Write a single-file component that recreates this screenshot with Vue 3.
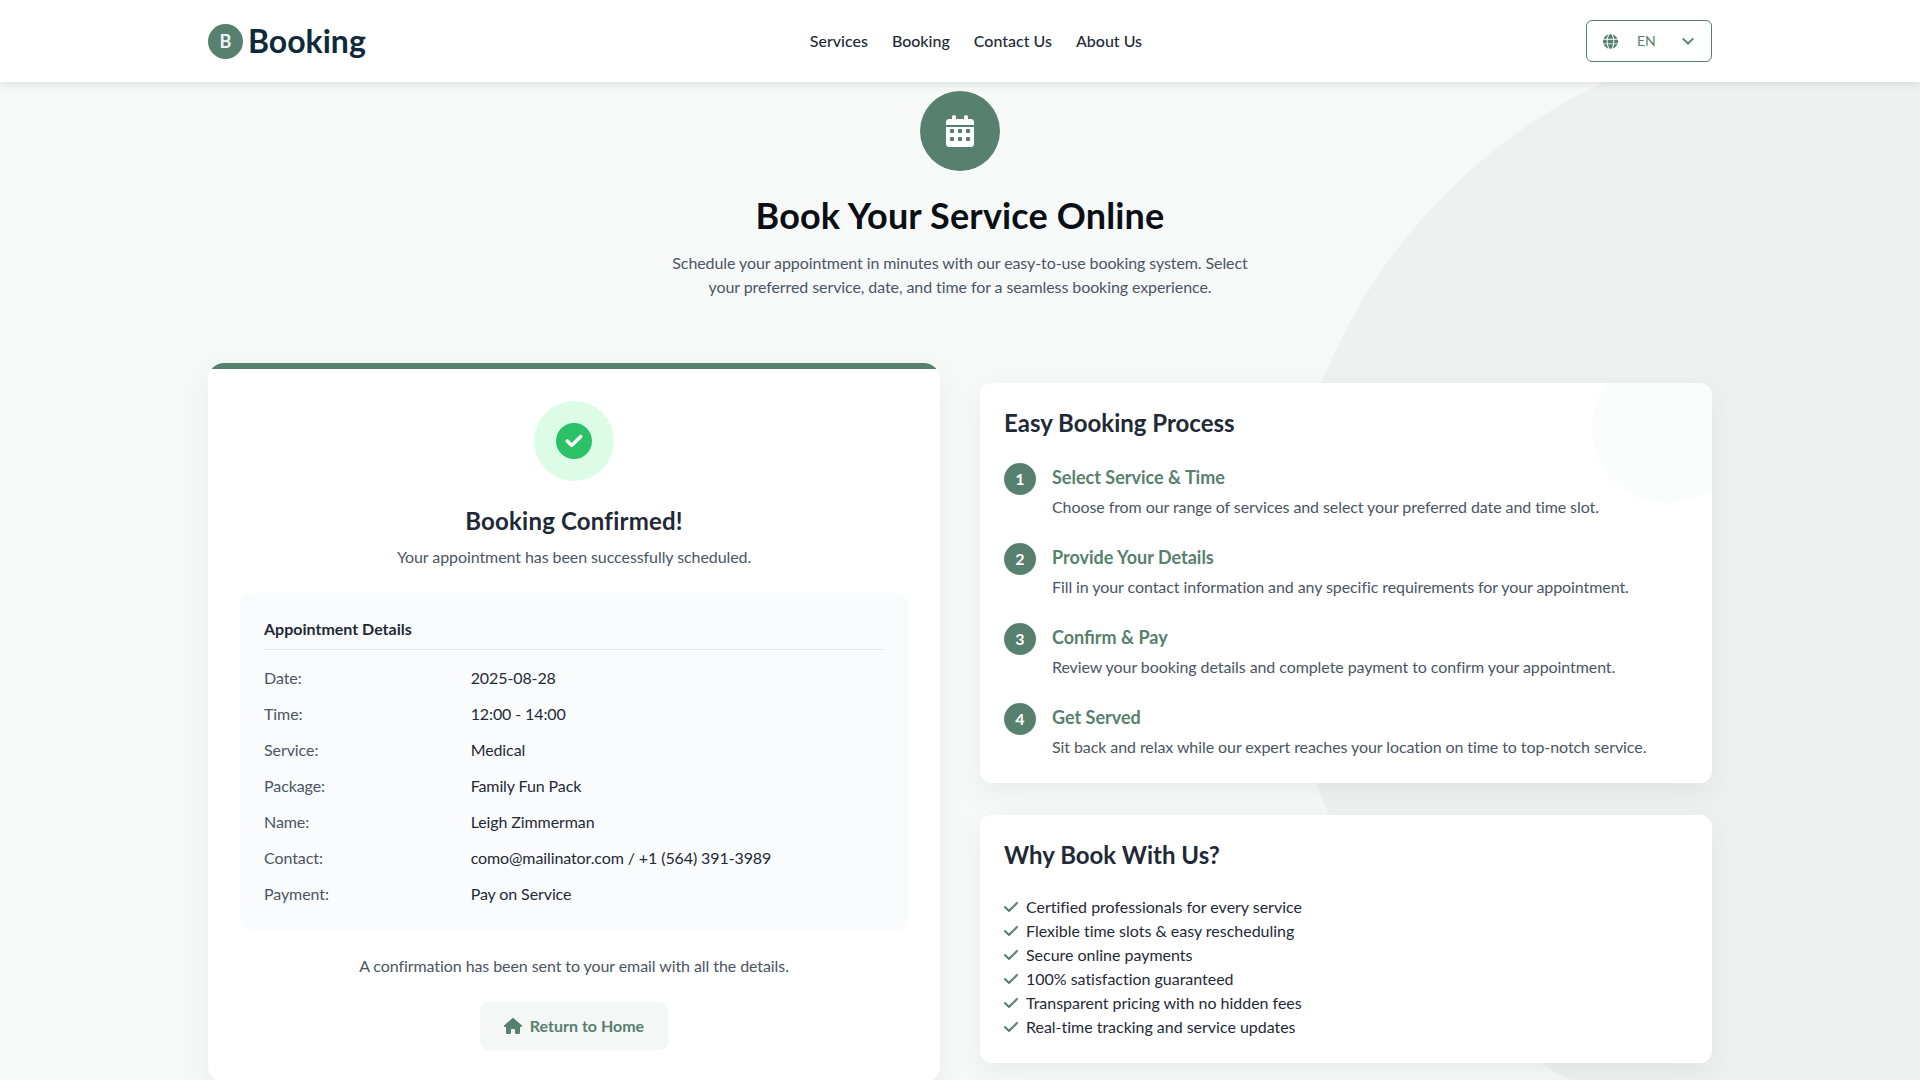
<template>
  <div class="page">
    <div class="blob"></div>
    <header class="topbar">
      <div class="topbar-inner">
        <a class="logo">
          <span class="logo-mark">B</span>
          <span class="logo-text">Booking</span>
        </a>
        <nav class="nav">
          <a v-for="link in links" :key="link">{{ link }}</a>
        </nav>
        <div class="lang">
          <svg class="globe" viewBox="0 0 512 512"><path d="M352 256c0 22.200-1.200 43.600-3.300 64H163.300c-2.200-20.400-3.300-41.800-3.300-64s1.200-43.600 3.300-64h185.400c2.200 20.400 3.300 41.800 3.300 64zm28.800-64h123.100c5.300 20.500 8.100 41.900 8.100 64s-2.800 43.500-8.100 64H380.800c2.100-20.600 3.200-42 3.200-64s-1.100-43.400-3.200-64zm112.600-32H376.700c-10-63.900-29.800-117.400-55.300-151.600 78.300 20.700 142 77.500 171.900 151.600zm-149.100 0H167.700c6.100-36.400 15.500-68.600 27-94.700 10.500-23.600 22.200-40.700 33.500-51.500C239.400 3.200 248.700 0 256 0s16.600 3.200 27.800 13.800c11.300 10.800 23 27.900 33.500 51.500 11.600 26 20.900 58.200 27 94.700zm-209 0H18.600C48.600 85.900 112.200 29.100 190.600 8.400 165.100 42.600 145.300 96.100 135.300 160zM8.100 192h123.100c-2.100 20.600-3.200 42-3.200 64s1.100 43.400 3.200 64H8.100C2.800 299.500 0 278.100 0 256s2.800-43.500 8.100-64zm186.600 254.600c-11.600-26-20.900-58.200-27-94.600h176.600c-6.100 36.400-15.500 68.600-27 94.600-10.500 23.600-22.200 40.700-33.500 51.500-11.200 10.700-20.500 13.900-27.800 13.900s-16.600-3.200-27.800-13.800c-11.300-10.800-23-27.900-33.500-51.500zM135.300 352c10 63.900 29.800 117.400 55.300 151.600-78.400-20.700-142-77.500-172-151.600h116.700zm358.100 0c-30 74.100-93.600 130.900-171.900 151.600 25.500-34.200 45.200-87.700 55.300-151.600h116.600z"/></svg>
          <span class="lang-code">EN</span>
          <svg class="chevron" viewBox="0 0 16 16"><path d="M2 5l6 6 6-6" /></svg>
        </div>
      </div>
    </header>

    <main class="main">
      <section class="hero">
        <div class="hero-icon">
          <svg viewBox="0 0 448 512"><path d="M96 32V64H48C21.500 64 0 85.500 0 112v48H448V112c0-26.500-21.500-48-48-48H352V32c0-17.700-14.300-32-32-32s-32 14.300-32 32V64H160V32c0-17.700-14.300-32-32-32S96 14.300 96 32zM448 192H0V464c0 26.500 21.500 48 48 48H400c26.500 0 48-21.500 48-48V192zM64 240c0-8.800 7.200-16 16-16h32c8.800 0 16 7.200 16 16v32c0 8.800-7.200 16-16 16H80c-8.800 0-16-7.200-16-16V240zm128 0c0-8.800 7.200-16 16-16h32c8.800 0 16 7.200 16 16v32c0 8.800-7.200 16-16 16H208c-8.800 0-16-7.200-16-16V240zm144-16h32c8.800 0 16 7.200 16 16v32c0 8.800-7.200 16-16 16H336c-8.800 0-16-7.200-16-16V240c0-8.800 7.200-16 16-16zM64 368c0-8.800 7.200-16 16-16h32c8.800 0 16 7.200 16 16v32c0 8.800-7.200 16-16 16H80c-8.800 0-16-7.200-16-16V368zm144-16h32c8.800 0 16 7.200 16 16v32c0 8.800-7.200 16-16 16H208c-8.800 0-16-7.200-16-16V368c0-8.800 7.200-16 16-16zm112 16c0-8.800 7.200-16 16-16h32c8.800 0 16 7.200 16 16v32c0 8.800-7.200 16-16 16H336c-8.800 0-16-7.200-16-16V368z"/></svg>
        </div>
        <h1>Book Your Service Online</h1>
        <p>Schedule your appointment in minutes with our easy-to-use booking system. Select your preferred service, date, and time for a seamless booking experience.</p>
      </section>

      <div class="columns">
        <section class="confirm-card">
          <div class="success-ring">
            <svg viewBox="0 0 512 512"><circle cx="256" cy="256" r="220" fill="#fff" /><path d="M256 512A256 256 0 1 0 256 0a256 256 0 1 0 0 512zM369 209L241 337c-9.400 9.400-24.600 9.400-33.900 0l-64-64c-9.400-9.400-9.400-24.600 0-33.900s24.600-9.400 33.900 0l47 47L335 175c9.400-9.400 24.600-9.400 33.900 0s9.400 24.600 0 33.900z" /></svg>
          </div>
          <h2>Booking Confirmed!</h2>
          <p class="muted">Your appointment has been successfully scheduled.</p>

          <div class="details">
            <h3>Appointment Details</h3>
            <div class="detail-row" v-for="row in details" :key="row.label">
              <span class="detail-label">{{ row.label }}</span>
              <span class="detail-value">{{ row.value }}</span>
            </div>
          </div>

          <p class="muted sent">A confirmation has been sent to your email with all the details.</p>
          <button class="home-btn">
            <svg viewBox="0 0 576 512"><path d="M575.800 255.500c0 18-15 32.100-32 32.100h-32l.7 160.200c0 2.700-.2 5.400-.5 8.100V472c0 22.100-17.900 40-40 40H456c-1.100 0-2.200 0-3.300-.1c-1.400 .1-2.800 .1-4.200 .1H416 392c-22.100 0-40-17.900-40-40V448 384c0-17.700-14.300-32-32-32H256c-17.700 0-32 14.300-32 32v64 24c0 22.100-17.900 40-40 40H160 128.100c-1.500 0-3-.1-4.500-.2c-1.200 .1-2.400 .2-3.600 .2H104c-22.100 0-40-17.900-40-40V360c0-.9 0-1.900 .1-2.800V287.600H32c-18 0-32-14-32-32.100c0-9 3-17 10-24L266.400 8c7-7 15-8 22-8s15 2 21 7L564.800 231.500c8 7 12 15 11 24z"/></svg>
            Return to Home
          </button>
        </section>

        <aside class="side">
          <section class="side-card process">
            <h2>Easy Booking Process</h2>
            <div class="step" v-for="(step, i) in steps" :key="step.title">
              <span class="step-num">{{ i + 1 }}</span>
              <div>
                <h4>{{ step.title }}</h4>
                <p class="muted">{{ step.text }}</p>
              </div>
            </div>
          </section>

          <section class="side-card">
            <h2>Why Book With Us?</h2>
            <ul class="perks">
              <li v-for="perk in perks" :key="perk">
                <svg viewBox="0 0 448 512"><path d="M438.600 105.400c12.500 12.500 12.500 32.800 0 45.300l-256 256c-12.500 12.500-32.800 12.500-45.300 0l-128-128c-12.500-12.500-12.500-32.800 0-45.300s32.800-12.500 45.300 0L160 338.700 393.400 105.400c12.500-12.500 32.800-12.500 45.300 0z" /></svg>
                {{ perk }}
              </li>
            </ul>
          </section>
        </aside>
      </div>
    </main>
  </div>
</template>

<script setup>
const links = ["Services", "Booking", "Contact Us", "About Us"];

const details = [
  { label: "Date:", value: "2025-08-28" },
  { label: "Time:", value: "12:00 - 14:00" },
  { label: "Service:", value: "Medical" },
  { label: "Package:", value: "Family Fun Pack" },
  { label: "Name:", value: "Leigh Zimmerman" },
  { label: "Contact:", value: "como@mailinator.com / +1 (564) 391-3989" },
  { label: "Payment:", value: "Pay on Service" },
];

const steps = [
  { title: "Select Service & Time", text: "Choose from our range of services and select your preferred date and time slot." },
  { title: "Provide Your Details", text: "Fill in your contact information and any specific requirements for your appointment." },
  { title: "Confirm & Pay", text: "Review your booking details and complete payment to confirm your appointment." },
  { title: "Get Served", text: "Sit back and relax while our expert reaches your location on time to top-notch service." },
];

const perks = [
  "Certified professionals for every service",
  "Flexible time slots & easy rescheduling",
  "Secure online payments",
  "100% satisfaction guaranteed",
  "Transparent pricing with no hidden fees",
  "Real-time tracking and service updates",
];
</script>

<style>
html,
body {
  margin: 0;
  overflow-x: hidden;
}
</style>

<style scoped>
.page {
  position: relative;
  min-height: 1080px;
  background: #f7f9f9;
  font-family: Lato, "Liberation Sans", sans-serif;
  font-size: 16px;
  line-height: 24px;
  color: #1f2937;
  overflow: hidden;
}
.blob {
  position: absolute;
  top: 28px;
  left: 1282px;
  width: 1124px;
  height: 1124px;
  border-radius: 50%;
  background: #edf1f0;
}

.topbar {
  position: relative;
  z-index: 2;
  height: 82px;
  background: #fff;
  box-shadow: 0 2px 8px rgba(0, 0, 0, 0.1);
}
.topbar-inner {
  display: flex;
  justify-content: space-between;
  align-items: center;
  height: 100%;
  max-width: 1504px;
  margin: 0 auto;
}
.logo {
  display: flex;
  align-items: center;
  gap: 5px;
}
.logo-mark {
  display: flex;
  align-items: center;
  justify-content: center;
  width: 35px;
  height: 35px;
  border-radius: 50%;
  background: #57806e;
  color: #eef3f1;
  font-size: 18px;
  font-weight: 700;
}
.logo-text {
  font-size: 32px;
  line-height: 40px;
  font-weight: 700;
  color: #0f2a3a;
}
.nav {
  display: flex;
  gap: 24px;
}
.nav a {
  color: #1f2937;
  font-weight: 500;
}
.lang {
  display: flex;
  align-items: center;
  box-sizing: border-box;
  width: 126px;
  height: 42px;
  padding: 0 16px;
  border: 1px solid #57806e;
  border-radius: 6px;
  background: #fff;
  color: #57806e;
  font-size: 14px;
}
.globe {
  width: 15px;
  height: 15px;
  fill: #57806e;
}
.lang-code {
  margin-left: 19px;
}
.chevron {
  width: 14px;
  height: 14px;
  margin-left: auto;
  fill: none;
  stroke: #57806e;
  stroke-width: 2.200;
}

.main {
  position: relative;
  z-index: 1;
  max-width: 1504px;
  margin: 0 auto;
}
.hero {
  display: flex;
  flex-direction: column;
  align-items: center;
  padding-top: 9px;
  text-align: center;
}
.hero-icon {
  display: flex;
  align-items: center;
  justify-content: center;
  width: 80px;
  height: 80px;
  border-radius: 50%;
  background: #57806e;
  margin-bottom: 24px;
}
.hero-icon svg {
  width: 28px;
  height: 32px;
  fill: #fff;
}
.hero h1 {
  margin: 0 0 16px;
  font-size: 36px;
  line-height: 40px;
  font-weight: 700;
  letter-spacing: 0.15px;
  color: #0b0f14;
}
.hero p {
  margin: 0;
  width: 600px;
  letter-spacing: -0.09px;
  color: #4b5563;
}

.columns {
  display: grid;
  grid-template-columns: 1fr 1fr;
  gap: 40px;
  margin-top: 64px;
  align-items: start;
}
.confirm-card {
  position: relative;
  overflow: hidden;
  display: flex;
  flex-direction: column;
  align-items: center;
  padding: 38px 32px 32px;
  border-radius: 16px;
  background: #fff;
  box-shadow: 0 10px 30px rgba(0, 0, 0, 0.06);
  text-align: center;
}
.confirm-card::before {
  content: "";
  position: absolute;
  top: 0;
  left: 0;
  right: 0;
  height: 6px;
  background: #57806e;
}
.success-ring {
  display: flex;
  align-items: center;
  justify-content: center;
  width: 80px;
  height: 80px;
  margin-bottom: 24px;
  border-radius: 50%;
  background: #dcfce7;
}
.success-ring svg {
  width: 36px;
  height: 36px;
  fill: #2ac167;
}
.confirm-card h2 {
  margin: 0 0 8px;
  font-size: 24px;
  line-height: 32px;
  font-weight: 700;
  letter-spacing: 0.2px;
}
.muted {
  margin: 0;
  letter-spacing: -0.08px;
  color: #4b5563;
}
.details {
  align-self: stretch;
  margin-top: 24px;
  padding: 24px;
  border-radius: 12px;
  background: #fafbfc;
  text-align: left;
}
.details h3 {
  margin: 0 0 16px;
  padding-bottom: 8px;
  border-bottom: 1px solid #e5e7eb;
  font-size: 16px;
  line-height: 24px;
  font-weight: 700;
}
.detail-row {
  display: flex;
  margin-bottom: 12px;
}
.detail-row:last-child {
  margin-bottom: 0;
}
.detail-label {
  width: 33.333%;
  letter-spacing: -0.08px;
  color: #4b5563;
}
.detail-value {
  letter-spacing: -0.1px;
  color: #1f2937;
}
.sent {
  margin-top: 24px;
}
.home-btn {
  display: flex;
  align-items: center;
  gap: 8px;
  height: 48px;
  margin-top: 24px;
  padding: 0 24px;
  border: none;
  border-radius: 8px;
  background: #f5f7f7;
  color: #57806e;
  font: 700 16px/24px Lato, "Liberation Sans", sans-serif;
}
.home-btn svg {
  width: 18px;
  height: 16px;
  fill: #57806e;
}

.side {
  display: flex;
  flex-direction: column;
  gap: 32px;
  margin-top: 20px;
}
.side-card {
  position: relative;
  overflow: hidden;
  padding: 24px;
  border-radius: 12px;
  background: #fff;
  box-shadow: 0 10px 30px rgba(0, 0, 0, 0.06);
}
.process::before {
  content: "";
  position: absolute;
  top: -30px;
  right: -30px;
  width: 150px;
  height: 150px;
  border-radius: 50%;
  background: rgba(87, 128, 110, 0.025);
}
.side-card h2 {
  margin: 0 0 24px;
  font-size: 24px;
  line-height: 32px;
  font-weight: 700;
}
.step {
  position: relative;
  display: flex;
  gap: 16px;
  margin-bottom: 24px;
}
.step:last-child {
  margin-bottom: 0;
}
.step-num {
  flex: none;
  display: flex;
  align-items: center;
  justify-content: center;
  width: 32px;
  height: 32px;
  border-radius: 50%;
  background: #57806e;
  color: #fff;
  font-weight: 700;
}
.step h4 {
  margin: 0 0 4px;
  font-size: 18px;
  line-height: 28px;
  font-weight: 700;
  color: #57806e;
}
.perks {
  margin: 0;
  padding: 0;
  list-style: none;
}
.perks li {
  display: flex;
  align-items: center;
  gap: 8px;
  letter-spacing: -0.02px;
}
.perks svg {
  width: 14px;
  height: 16px;
  fill: #57806e;
}
</style>
